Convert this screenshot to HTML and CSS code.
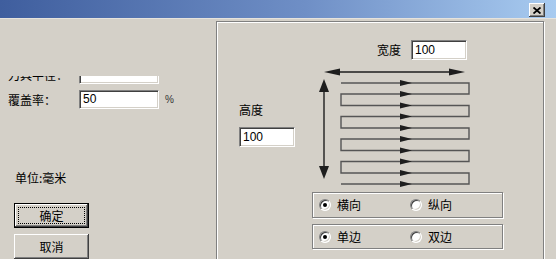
FILE: index.html
```html
<!DOCTYPE html>
<html lang="zh">
<head>
<meta charset="UTF-8">
<title>填充设置</title>
<link rel="stylesheet" href="styles.css">
</head>
<body>
<div class="window">
    <div class="titlebar">
        <button class="close" aria-label="关闭">
            <svg width="8" height="7" viewBox="0 0 8 7">
                <path d="M0.5 0.5 L7.5 6.5 M7.5 0.5 L0.5 6.5" stroke="#000" stroke-width="1.8" fill="none"/>
            </svg>
        </button>
    </div>

    <div class="main">
        <div class="left">
            <div class="clip">
                <div class="row">
                    <span class="label">刀具半径：</span>
                    <span class="field"></span>
                </div>
            </div>
            <div class="row">
                <span class="label">覆盖率：</span>
                <span class="field">50</span>
                <span class="unit">%</span>
            </div>
            <div class="units">单位:毫米</div>
            <button class="btn default"><span class="focus">确定</span></button>
            <button class="btn">取消</button>
        </div>

        <div class="panel">
            <div class="width-row">
                <span class="label">宽度</span>
                <span class="field small">100</span>
            </div>

            <div class="height-box">
                <span class="label">高度</span>
                <span class="field small">100</span>
            </div>

            <svg class="diagram" width="191" height="132" viewBox="0 0 191 132">
                <!-- width arrow -->
                <line x1="20" y1="12" x2="145" y2="12" stroke="#1e1e1e" stroke-width="1.4"/>
                <polygon points="12,12 28,8.5 28,15.5" fill="#1e1e1e"/>
                <polygon points="153,12 137,8.5 137,15.5" fill="#1e1e1e"/>
                <!-- height arrow -->
                <line x1="12" y1="26" x2="12" y2="112" stroke="#1e1e1e" stroke-width="1.4"/>
                <polygon points="12,19 7,32 17,32" fill="#1e1e1e"/>
                <polygon points="12,119 7,106 17,106" fill="#1e1e1e"/>
                <!-- fill path -->
                <path d="M29 23 H157 V34 H29 V45.5 H157 V56.5 H29 V68 H157 V79 H29 V90.5 H157 V101.5 H29 V113 H157 V124 H29"
                      stroke="#555" stroke-width="1.4" fill="none"/>
                <g fill="#1e1e1e">
                    <polygon points="88,20 100,23 88,26"/>
                    <polygon points="88,31 100,34 88,37"/>
                    <polygon points="88,42.5 100,45.5 88,48.5"/>
                    <polygon points="88,53.5 100,56.5 88,59.5"/>
                    <polygon points="88,65 100,68 88,71"/>
                    <polygon points="88,76 100,79 88,82"/>
                    <polygon points="88,87.5 100,90.5 88,93.5"/>
                    <polygon points="88,98.5 100,101.5 88,104.5"/>
                    <polygon points="88,110 100,113 88,116"/>
                    <polygon points="88,121 100,124 88,127"/>
                </g>
            </svg>

            <div class="radios">
                <div class="group">
                    <label class="opt"><span class="radio checked"></span>横向</label>
                    <label class="opt"><span class="radio"></span>纵向</label>
                </div>
                <div class="group second">
                    <label class="opt"><span class="radio checked"></span>单边</label>
                    <label class="opt"><span class="radio"></span>双边</label>
                </div>
            </div>
        </div>
    </div>
</div>
</body>
</html>
```

FILE: styles.css
```css
body {
    margin: 0;
    background-color: #d4d0c8;
    font-family: "Noto Sans CJK SC", "Liberation Sans", sans-serif;
    font-size: 12px;
    color: #000;
}
.window {
    width: 556px;
    height: 259px;
    overflow: hidden;
}
.titlebar {
    height: 18px;
    display: flex;
    justify-content: flex-end;
    align-items: flex-start;
    padding-right: 11px;
    background: linear-gradient(to right, #3f5e9e, #6f8fc6 55%, #a8cbf0);
    border-bottom: 1px solid #e6e3dd;
}
.close {
    width: 16px;
    height: 14px;
    margin-top: 3px;
    padding: 0;
    border: none;
    display: flex;
    justify-content: center;
    align-items: center;
    background-color: #d4d0c8;
    box-shadow: inset -1px -1px #404040, inset 1px 1px #fff, inset -2px -2px #808080;
}
.main {
    display: flex;
}
.left {
    flex: 0 0 216px;
    padding-top: 57px;
}
.clip {
    height: 8px;
    overflow: hidden;
    display: flex;
    flex-direction: column;
    justify-content: flex-end;
}
.row {
    flex: 0 0 19px;
    height: 19px;
    display: flex;
    align-items: center;
    padding-left: 8px;
    margin-top: 6px;
}
.clip .row {
    margin-top: 0;
}
.row .label {
    width: 71px;
    line-height: 14px;
}
.field {
    box-sizing: border-box;
    width: 80px;
    height: 19px;
    padding-left: 3px;
    background-color: #fff;
    border: 1px solid;
    border-color: #808080 #fff #fff #808080;
    box-shadow: inset 1px 1px #404040, inset -1px -1px #d4d0c8;
    font-family: "Liberation Sans", sans-serif;
    font-size: 12px;
    line-height: 17px;
}
.field.small {
    width: 56px;
    height: 20px;
    line-height: 18px;
}
.unit {
    margin-left: 6px;
    font-family: "Liberation Sans", sans-serif;
    font-size: 10px;
    color: #333;
}
.units {
    margin: 62px 0 0 15px;
    line-height: 14px;
}
.btn {
    display: flex;
    box-sizing: border-box;
    width: 75px;
    height: 25px;
    margin: 18px 0 0 14px;
    padding: 0;
    border: none;
    justify-content: center;
    align-items: center;
    background-color: #d4d0c8;
    font-family: "Noto Sans CJK SC", sans-serif;
    font-size: 12px;
    box-shadow: inset -1px -1px #404040, inset 1px 1px #fff, inset -2px -2px #808080;
}
.btn + .btn {
    margin-top: 6px;
}
.btn.default {
    border: 1px solid #000;
    padding: 3px;
}
.focus {
    flex: 1;
    align-self: stretch;
    display: flex;
    justify-content: center;
    align-items: center;
    border: 1px dotted #000;
}
.panel {
    box-sizing: content-box;
    width: 326px;
    height: 260px;
    margin-top: 2px;
    border: 1px solid #808080;
    box-shadow: inset 1px 1px #fff, 1px 1px #fff;
    display: grid;
    grid-template-columns: 95px 191px;
    grid-template-rows: 38px 132px auto;
    grid-template-areas:
        ". width"
        "height diagram"
        ". radios";
    align-content: start;
}
.width-row {
    grid-area: width;
    align-self: end;
    display: flex;
    justify-content: flex-end;
    align-items: center;
    gap: 10px;
    padding-right: 36px;
}
.height-box {
    grid-area: height;
    display: flex;
    flex-direction: column;
    align-items: flex-start;
    padding: 43px 0 0 22px;
    gap: 10px;
}
.label {
    line-height: 14px;
}
.diagram {
    grid-area: diagram;
    display: block;
}
.radios {
    grid-area: radios;
}
.group {
    box-sizing: border-box;
    width: 191px;
    height: 26px;
    display: flex;
    align-items: center;
    padding-left: 6px;
    border: 1px solid #808080;
    box-shadow: inset 1px 1px #fff, 1px 1px #fff;
}
.group.second {
    height: 25px;
    margin-top: 6px;
}
.opt {
    width: 91px;
    display: flex;
    align-items: center;
    gap: 6px;
    line-height: 14px;
}
.radio {
    box-sizing: border-box;
    width: 12px;
    height: 12px;
    border-radius: 50%;
    background-color: #fff;
    border: 1px solid;
    border-color: #808080 #fff #fff #808080;
    box-shadow: inset 1px 1px #404040, inset -1px -1px #d4d0c8;
    display: flex;
    justify-content: center;
    align-items: center;
}
.radio.checked::after {
    content: "";
    width: 4px;
    height: 4px;
    border-radius: 50%;
    background-color: #000;
}
```
